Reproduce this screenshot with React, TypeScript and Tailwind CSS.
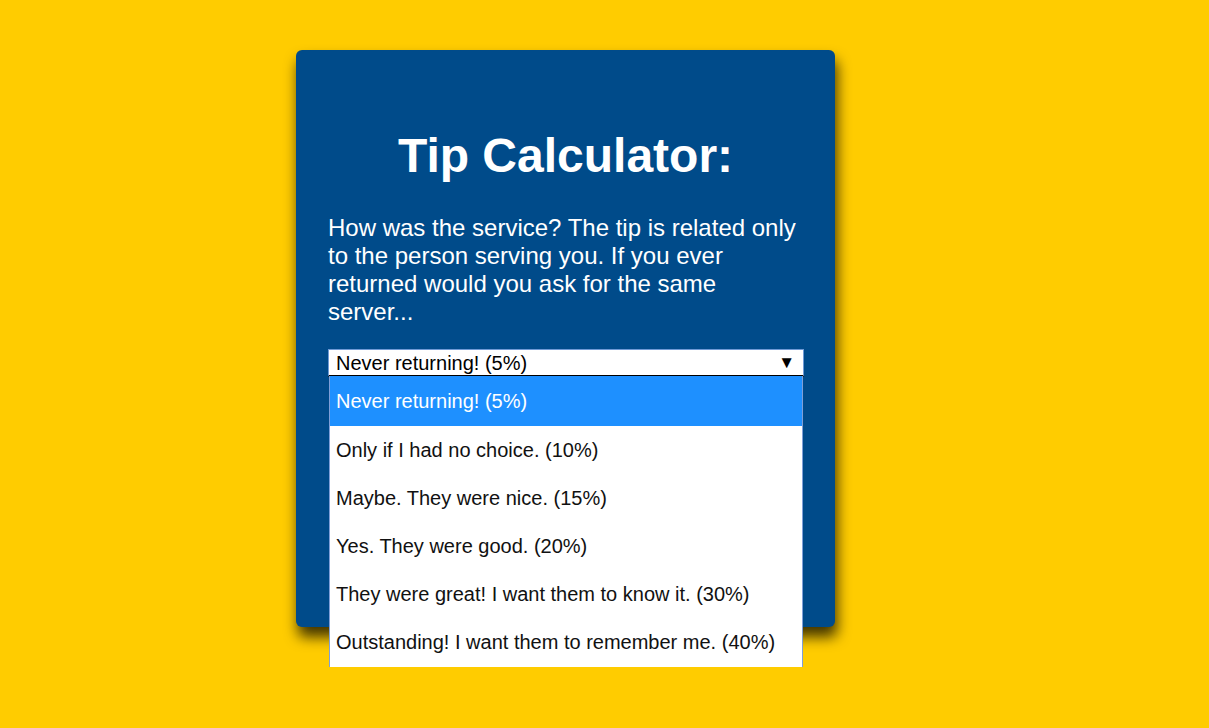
const options = [
  'Never returning! (5%)',
  'Only if I had no choice. (10%)',
  'Maybe. They were nice. (15%)',
  'Yes. They were good. (20%)',
  'They were great! I want them to know it. (30%)',
  'Outstanding! I want them to remember me. (40%)',
];

export default function App() {
  const selected = 0;

  return (
    <div className="min-h-screen bg-[#ffcc00] pl-[296px] pt-[50px] font-['Liberation_Sans',Arial,sans-serif]">
      <div className="h-[577px] w-[539px] rounded-md bg-[#004b8a] px-8 pt-[70px] shadow-[2px_10px_14px_rgba(0,0,0,0.75)]">
        <h1 className="text-center text-[48px] font-bold leading-[72px] text-white">Tip Calculator:</h1>

        <p className="mt-[22px] text-[24px] leading-[28px] text-white">
          How was the service? The tip is related only to the person serving you. If you ever returned would you ask
          for the same server...
        </p>

        {/* select, shown open */}
        <div className="relative mt-[23px] w-[476px]">
          <div className="flex h-[28px] items-center justify-between border border-b-2 border-[#6f9ad6] border-b-black bg-white pl-[7px] pr-[8px] text-[20px] leading-none text-black">
            <span>{options[selected]}</span>
            <span className="text-[17px] leading-none">▼</span>
          </div>
          <ul className="absolute left-px top-[27px] w-[474px] border-x border-[#7f9fd8] bg-white pb-px text-[20px]">
            {options.map((opt, i) => (
              <li
                key={opt}
                className={`flex items-center pl-[6px] ${
                  i === selected ? 'h-[50px] bg-[#1e90ff] text-white' : 'h-[48px] text-[#111]'
                }`}
              >
                {opt}
              </li>
            ))}
          </ul>
        </div>
      </div>
    </div>
  );
}
